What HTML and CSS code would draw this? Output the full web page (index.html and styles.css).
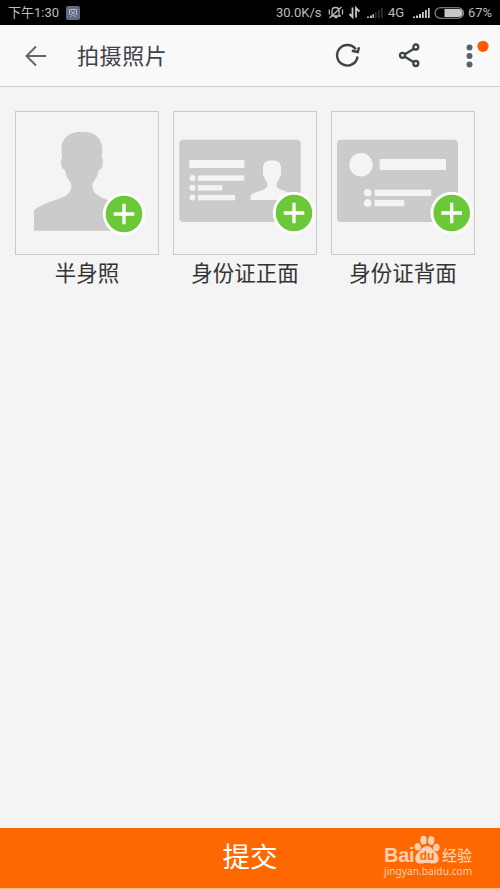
FILE: index.html
```html
<!DOCTYPE html>
<html lang="zh-CN">

<head>
    <meta charset="UTF-8">
    <meta name="viewport" content="width=device-width, initial-scale=1.0">
    <title>拍摄照片</title>
    <link rel="stylesheet" href="styles.css">
</head>

<body>

    <div class="status-bar">
        <span class="time">下午1:30</span>
        <svg class="app-icon" width="14" height="14" viewBox="0 0 14 14">
            <rect width="14" height="14" rx="2" fill="#626b82" />
            <path d="M3.500 9V3.500h7V9M4.500 11l2-2M9.500 11l-2-2M5 5l4 3.500M9 5L5 8.500" fill="none" stroke="#b9bfce" stroke-width="1" />
        </svg>
        <span class="speed">30.0K/s</span>
        <svg class="status-icons" width="56" height="14" viewBox="327 6 56 14">
            <!-- muted bell -->
            <g fill="none" stroke="#bbb" stroke-width="1.3">
                <path d="M331 16h10M332 15.500V11q0-3.500 3.500-3.500T339 11v4.500M334.500 17.500h3M329.500 18L341.500 7M329.300 9.500v5M342.500 9.500v5" />
            </g>
            <!-- data arrows -->
            <path d="M352.500 7.500V17l-3-3M356 17.500V8l3.500 3.500" fill="none" stroke="#c8c8c8" stroke-width="1.8" />
            <!-- weak signal -->
            <path d="M367 18v-1.500h2V18zM370 18v-2.500h2V18zM372.500 18v-4h1.500v4z" fill="#bbb" />
            <path d="M375 18v-6h1.700v6zM378 18v-8h1.700v8zM381 18V8h1.700v10z" fill="#303030" />
        </svg>
        <span class="network">4G</span>
        <svg class="signal" width="17" height="12" viewBox="0 0 17 12">
            <path d="M0 11V9.500h2V11zM3 11V8.500h2V11zM6 11V7h2v4zM9 11V5h1.800v6zM12 11V3h1.800v8zM15 11V1h1.700v10z" fill="#c8c8c8" />
        </svg>
        <svg class="battery" width="31" height="12" viewBox="0 0 31 12">
            <rect x="1" y=".8" width="28.500" height="10.400" rx="5.200" fill="none" stroke="#9a9a9a" stroke-width="1.100" />
            <path d="M10.500 2h14a4 4 0 0 1 0 8h-14z" fill="#c8c8c8" />
        </svg>
        <span class="percent">67%</span>
    </div>

    <div class="header">
        <svg class="back" width="22" height="22" viewBox="0 0 22 22">
            <path d="M21 11H2M11 1.500L1.500 11l9.500 9.500" fill="none" stroke="#62666a" stroke-width="2" />
        </svg>
        <h1>拍摄照片</h1>
        <svg class="refresh" width="26" height="26" viewBox="0 0 26 26">
            <path d="M22.600 13.500A10.300 10.300 0 1 1 20.800 6.300" fill="none" stroke="#3e4347" stroke-width="2.400" />
            <path d="M16.800 7.800l6 1.200 1.200-4.700" fill="none" stroke="#3e4347" stroke-width="2.400" />
        </svg>
        <svg class="share" width="24" height="26" viewBox="0 0 24 26">
            <g fill="none" stroke="#3e4347" stroke-width="2.300">
                <path d="M6.500 11.500l9-5.500M6.500 13.500l9 5.500" />
                <circle cx="4.500" cy="12.300" r="2.500" />
                <circle cx="17.800" cy="4" r="2.500" />
                <circle cx="17.800" cy="20.500" r="2.500" />
            </g>
        </svg>
        <svg class="more" width="28" height="32" viewBox="0 0 28 32">
            <circle cx="6.500" cy="11.500" r="3" fill="#5c6068" />
            <circle cx="6.500" cy="20" r="3" fill="#5c6068" />
            <circle cx="6.500" cy="28.500" r="3" fill="#5c6068" />
            <circle cx="20" cy="10.300" r="5.600" fill="#ff5a00" />
        </svg>
    </div>

    <div class="photos">
        <div class="photo">
            <div class="frame">
                <svg width="142" height="142" viewBox="1 1 142 142">
                    <path d="M67 20.700C53 20.700 46.500 28 46.500 38L47 47C45.500 48 45.700 52 46.500 55C47 57.500 48.500 58.500 50 59C51 65 53.500 69 56 72.500C57 78 55.500 81 51 84.500C43 89.500 25 92.500 19 99.500V119.700H115V99.500C109 92.500 91 90 83 84.500C78.500 81.500 77 78 77.500 72.500C80 69 82.800 65 84 59C85.500 58.500 87 57 87.300 55C88 51.500 88.300 48 86.700 47L87.200 38C87.200 28 81 20.700 67 20.700Z" fill="#cbcbcb" />
                    <circle cx="109" cy="103" r="21.200" fill="#fff" />
                    <circle cx="109" cy="103" r="18.300" fill="#6bc836" />
                    <path d="M98.700 103h20.600M109 92.700v20.600" stroke="#fff" stroke-width="3.300" />
                </svg>
            </div>
            <p>半身照</p>
        </div>
        <div class="photo">
            <div class="frame">
                <svg width="142" height="142" viewBox="1 1 142 142">
                    <rect x="6.300" y="28.700" width="121.400" height="82.300" rx="4" fill="#cbcbcb" />
                    <g fill="#f4f4f4">
                        <rect x="16.300" y="49" width="55" height="8" />
                        <circle cx="19.500" cy="67" r="3" />
                        <rect x="25" y="64.400" width="46.300" height="5.300" />
                        <circle cx="19.500" cy="76.800" r="3" />
                        <rect x="25" y="74.200" width="24.300" height="5.300" />
                        <circle cx="19.500" cy="86.500" r="3" />
                        <rect x="25" y="84" width="37" height="5.300" />
                        <path d="M99 49.200C93 49.200 90 52.500 90 57V61C89.500 63 90 65.500 91.500 66.200C92 69 93 70.500 94.300 72C94.500 75.500 94 76.500 92 77.800C88 80 80 81.500 77.700 84.500V89H120V84.500C118 81.500 110 80 106 77.800C104 76.500 103.500 75.500 103.700 72C105 70.500 106 69 106.500 66.200C108 65.500 108.700 63 108 61V57C108 52.500 105 49.200 99 49.200Z" />
                    </g>
                    <circle cx="121" cy="102" r="21.200" fill="#fff" />
                    <circle cx="121" cy="102" r="18.300" fill="#6bc836" />
                    <path d="M110.700 102h20.600M121 91.700v20.600" stroke="#fff" stroke-width="3.300" />
                </svg>
            </div>
            <p>身份证正面</p>
        </div>
        <div class="photo">
            <div class="frame">
                <svg width="142" height="142" viewBox="1 1 142 142">
                    <rect x="6" y="28.700" width="121" height="82.300" rx="4" fill="#cbcbcb" />
                    <g fill="#f4f4f4">
                        <circle cx="30" cy="53.700" r="11.700" />
                        <rect x="48.700" y="48" width="66.300" height="11" />
                        <circle cx="36.700" cy="81.800" r="3.800" />
                        <rect x="43.700" y="78.700" width="56.500" height="6.300" />
                        <circle cx="36.700" cy="92" r="3.800" />
                        <rect x="43.700" y="88.900" width="29.600" height="6.300" />
                    </g>
                    <circle cx="120.700" cy="102" r="21.200" fill="#fff" />
                    <circle cx="120.700" cy="102" r="18.300" fill="#6bc836" />
                    <path d="M110.400 102h20.600M120.700 91.700v20.600" stroke="#fff" stroke-width="3.300" />
                </svg>
            </div>
            <p>身份证背面</p>
        </div>
    </div>

    <div class="submit">
        <span>提交</span>
        <div class="watermark">
            <div class="brand">
                <span class="bai">Bai</span>
                <span class="paw">
                    <svg width="26" height="29" viewBox="0 0 26 29">
                        <g fill="#ffd0b0">
                            <ellipse cx="3.700" cy="11.800" rx="3.200" ry="3.800" transform="rotate(-15 3.700 11.800)" />
                            <ellipse cx="9.500" cy="5.200" rx="3.200" ry="4.400" />
                            <ellipse cx="17.200" cy="5.500" rx="3.200" ry="4.400" transform="rotate(8 17.200 5.500)" />
                            <ellipse cx="22.400" cy="12.500" rx="3.200" ry="3.800" transform="rotate(12 22.400 12.500)" />
                            <path d="M13 11C9 11 7 15 4 17.500C0 21.500 0 28.500 6 28.500C9 28.500 10.500 28 13 28S17 28.500 20 28.500C26 28.500 26 21.500 22 17.500C19 15 17 11 13 11Z" />
                        </g>
                    </svg>
                    <span class="du">du</span>
                </span>
                <span class="exp">经验</span>
            </div>
            <div class="site">jingyan.baidu.com</div>
        </div>
    </div>

</body>

</html>
```

FILE: styles.css
```css
body {
    margin: 0;
    height: 889px;
    display: flex;
    flex-direction: column;
    overflow: hidden;
    background-color: #f4f4f4;
    color: #333;
    font-family: Roboto, "Noto Sans CJK SC", sans-serif;
}

svg {
    display: block;
    flex: none;
}

.status-bar {
    box-sizing: border-box;
    height: 25px;
    flex: none;
    display: flex;
    align-items: center;
    padding-left: 8px;
    background-color: #000;
    color: #bdbdbd;
    font-size: 13px;
    line-height: 25px;
    white-space: nowrap;
}

.time {
    width: 58px;
}

.speed {
    width: 46px;
    margin-left: 196px;
}

.status-icons {
    margin-left: 5px;
}

.network {
    width: 20px;
    margin-left: 5px;
}

.signal {
    margin-left: 5px;
}

.battery {
    margin-left: 4px;
}

.percent {
    margin-left: 3px;
}

.header {
    box-sizing: border-box;
    height: 62px;
    flex: none;
    display: flex;
    align-items: center;
    padding-left: 25px;
    background-color: #f9f9f9;
    border-bottom: 1px solid #cfcfcf;
}

.header h1 {
    width: 90px;
    margin: 2px 0 0 30px;
    color: #3e4347;
    font-size: 22px;
    font-weight: normal;
    line-height: 30px;
    letter-spacing: 0.6px;
    white-space: nowrap;
}

.refresh {
    margin-left: 168px;
}

.share {
    margin-left: 37px;
}

.more {
    margin: 0 0 8px 41px;
}

.photos {
    flex: 1;
    display: flex;
    align-items: flex-start;
    gap: 14px;
    padding: 24px 15px 0;
}

.photo {
    width: 144px;
}

.frame {
    border: 1px solid #cbcbcb;
}

.photo p {
    margin: 4px 0 0;
    font-size: 21.5px;
    line-height: 30px;
    text-align: center;
    white-space: nowrap;
}

.submit {
    position: relative;
    height: 60px;
    flex: none;
    background-color: #ff6700;
    border-bottom: 1px solid #ffb98a;
    color: #fff;
    font-size: 27.5px;
    line-height: 60px;
    text-align: center;
}

/* sits over the submit button */
.watermark {
    position: absolute;
    left: 384px;
    top: 7px;
    color: #ffd0b0;
    text-align: left;
}

.brand {
    display: flex;
    align-items: flex-end;
    height: 29px;
}

.bai {
    width: 30px;
    font-family: "Liberation Sans", sans-serif;
    font-size: 20px;
    font-weight: bold;
    line-height: 18px;
    letter-spacing: -0.3px;
}

.paw {
    position: relative;
}

.du {
    position: absolute;
    left: 0;
    bottom: 2px;
    width: 26px;
    color: #ff6700;
    font-family: "Liberation Sans", sans-serif;
    font-size: 12px;
    font-weight: bold;
    line-height: 12px;
    text-align: center;
}

.exp {
    margin-left: 2px;
    font-size: 15px;
    font-weight: 500;
    line-height: 15px;
}

.site {
    font-family: "Noto Sans", sans-serif;
    font-size: 10.2px;
    line-height: 15px;
}
```
